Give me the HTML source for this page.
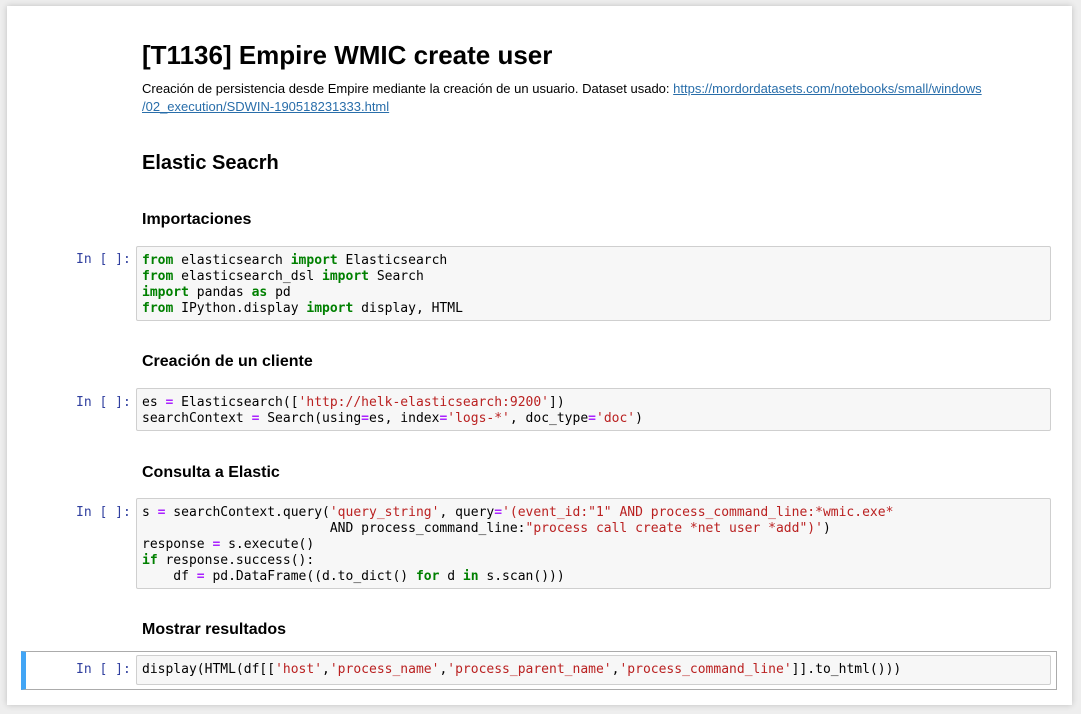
<!DOCTYPE html>
<html><head><meta charset="utf-8"><style>
body{margin:0;width:1081px;height:714px;background:#eeeeee;position:relative;overflow:hidden;font-family:"Liberation Sans",sans-serif;color:#000}
.page{position:absolute;left:7px;top:6px;width:1065px;height:699px;background:#fff;box-shadow:0 0 6px rgba(0,0,0,.2)}
.a{position:absolute;white-space:pre}
.code{position:absolute;left:136px;width:915px;background:#f7f7f7;border:1px solid #cfcfcf;border-radius:2px;font-family:"DejaVu Sans Mono",monospace;font-size:13px;line-height:16px;padding:6px 0 0 5px;box-sizing:border-box;white-space:pre;color:#000}
.p{position:absolute;left:76px;font-family:"DejaVu Sans Mono",monospace;font-size:13px;color:#303f9f;white-space:pre}
.k{color:#008000;font-weight:bold}.s{color:#ba2121}.o{color:#aa22ff;font-weight:bold}
a{color:#296eaa}
</style></head><body>
<div class="page"></div>
<div class="a" style="left:142px;top:40px;font-size:26px;font-weight:bold">[T1136] Empire WMIC create user</div>
<div class="a" style="left:142px;top:80px;font-size:13px;line-height:18px;color:#000">Creación de persistencia desde Empire mediante la creación de un usuario. Dataset usado: <a href="#">https://mordordatasets.com/notebooks/small/windows</a>
<a href="#">/02_execution/SDWIN-190518231333.html</a></div>
<div class="a" style="left:142px;top:152px;font-size:20px;font-weight:bold">Elastic Seacrh</div>
<div class="a" style="left:142px;top:211px;font-size:16px;font-weight:bold">Importaciones</div>
<div class="a" style="left:142px;top:353px;font-size:16px;font-weight:bold">Creación de un cliente</div>
<div class="a" style="left:142px;top:464px;font-size:16px;font-weight:bold">Consulta a Elastic</div>
<div class="a" style="left:142px;top:621px;font-size:16px;font-weight:bold">Mostrar resultados</div>

<div class="p" style="top:252px">In [ ]:</div>
<div class="code" style="top:246px;height:75px"><span class="k">from</span> elasticsearch <span class="k">import</span> Elasticsearch
<span class="k">from</span> elasticsearch_dsl <span class="k">import</span> Search
<span class="k">import</span> pandas <span class="k">as</span> pd
<span class="k">from</span> IPython.display <span class="k">import</span> display, HTML</div>

<div class="p" style="top:395px">In [ ]:</div>
<div class="code" style="top:388px;height:43px">es <span class="o">=</span> Elasticsearch([<span class="s">'http://helk-elasticsearch:9200'</span>])
searchContext <span class="o">=</span> Search(using<span class="o">=</span>es, index<span class="o">=</span><span class="s">'logs-*'</span>, doc_type<span class="o">=</span><span class="s">'doc'</span>)</div>

<div class="p" style="top:505px">In [ ]:</div>
<div class="code" style="top:498px;height:91px">s <span class="o">=</span> searchContext.query(<span class="s">'query_string'</span>, query<span class="o">=</span><span class="s">'(event_id:"1" AND process_command_line:*wmic.exe*</span>
                        AND process_command_line:<span class="s">"process call create *net user *add")'</span>)
response <span class="o">=</span> s.execute()
<span class="k">if</span> response.success():
    df <span class="o">=</span> pd.DataFrame((d.to_dict() <span class="k">for</span> d <span class="k">in</span> s.scan()))</div>

<div style="position:absolute;left:21px;top:651px;width:1036px;height:39px;border:1px solid #ababab;border-left:5px solid #42a5f5;box-sizing:border-box;background:#fff"></div>
<div class="p" style="top:662px">In [ ]:</div>
<div class="code" style="top:655px;height:30px;width:915px">display(HTML(df[[<span class="s">'host'</span>,<span class="s">'process_name'</span>,<span class="s">'process_parent_name'</span>,<span class="s">'process_command_line'</span>]].to_html()))</div>
</body></html>
